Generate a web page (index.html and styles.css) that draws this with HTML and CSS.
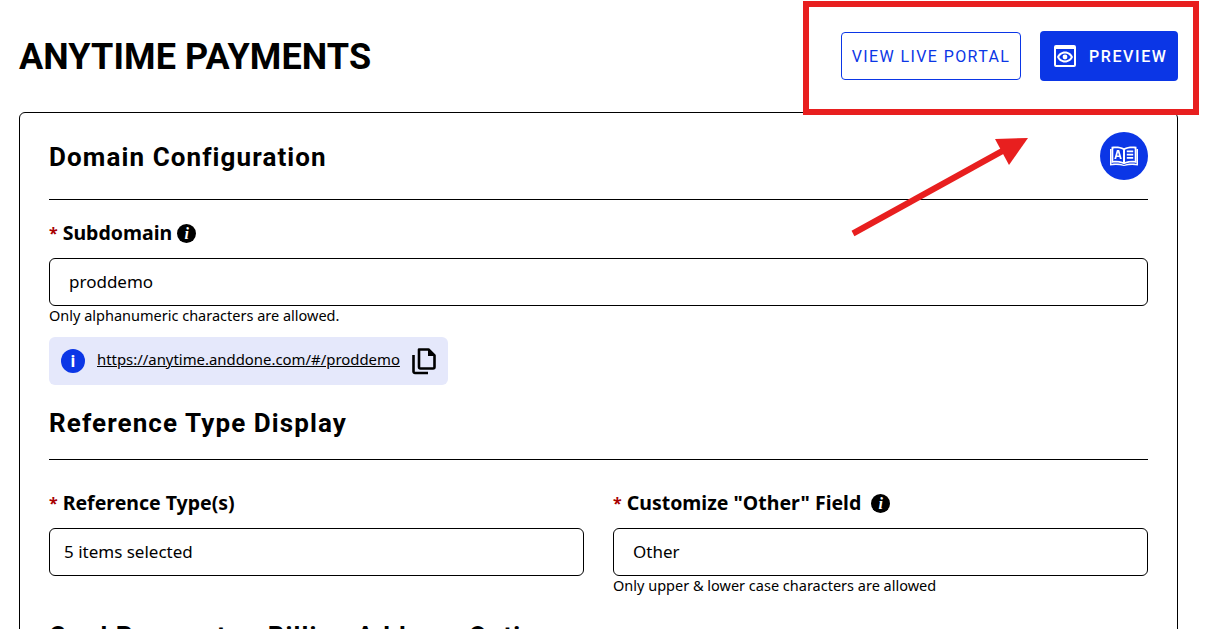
FILE: index.html
```html
<!DOCTYPE html>
<html lang="en">
<head>
<meta charset="utf-8">
<title>Anytime Payments</title>
<link rel="stylesheet" href="styles.css">
</head>
<body>
<div class="page">
  <header class="top">
    <h1 class="title">ANYTIME PAYMENTS</h1>
    <div class="actions">
      <a class="btn btn-outline">VIEW LIVE PORTAL</a>
      <a class="btn btn-solid">
        <svg class="eye" viewBox="0 0 22 22" width="22" height="22"><path fill="#fff" fill-rule="evenodd" d="M2 0h18a2 2 0 0 1 2 2v18a2 2 0 0 1-2 2H2a2 2 0 0 1-2-2V2a2 2 0 0 1 2-2zM2 4v16h18V4z"/><path fill="#fff" fill-rule="evenodd" d="M11 6.500c3.800 0 6.600 2.300 8 5.500-1.400 3.200-4.200 5.500-8 5.500S4.400 15.200 3 12c1.400-3.200 4.200-5.500 8-5.500zm0 1.900c-2.600 0-4.700 1.500-5.800 3.600 1.100 2.100 3.200 3.600 5.800 3.600s4.700-1.500 5.800-3.600c-1.100-2.100-3.200-3.600-5.800-3.600z"/><circle cx="11" cy="12" r="2.400" fill="#fff"/></svg>
        <span>PREVIEW</span>
      </a>
    </div>
  </header>

  <main class="card">
    <div class="section-head">
      <h2 class="section-title">Domain Configuration</h2>
      <span class="round-btn">
        <svg viewBox="0 0 28 20" width="28" height="20"><path fill="#fff" fill-rule="evenodd" d="M1.500 .8C5.500 0 10.500 .3 14 2.200 17.500 .3 22.500 0 26.500 .8V17c-4-.8-9-.6-12.500 1.300C10.500 16.400 5.500 16.200 1.500 17zM3.300 2.500v12.500c3.300-.4 6.500-.1 9.700 1.100V3.700C10 2.300 6.500 2 3.300 2.500zM15 3.700v12.400c3.200-1.200 6.400-1.500 9.700-1.100V2.500C21.500 2 18 2.300 15 3.700z"/><path fill="#fff" d="M0 3h1.500v15c4-.8 8.500-.6 12.500 1 4-1.600 8.500-1.800 12.500-1V3H28v16.500c-4.500-.9-9.500-.7-14 .5-4.500-1.200-9.500-1.400-14-.5z"/><path fill="#fff" fill-rule="evenodd" d="M6.900 4h2.300l2.600 9H9.900l-.5-1.900H6.700L6.200 13H4.300zm1.100 2.300-.9 3.300h1.900zM16.800 4.500h6.400v1.800h-6.400zM16.800 7.700h6.400v1.800h-6.400zM16.800 10.900h6.400v1.800h-6.400z"/></svg>
      </span>
    </div>
    <hr class="rule">

    <div class="field field-sub">
      <label class="label"><span class="req">*</span> Subdomain <span class="tip">i</span></label>
      <div class="input input-wide"><span class="value">proddemo</span></div>
      <p class="hint">Only alphanumeric characters are allowed.</p>
    </div>

    <div class="url-box">
      <span class="info-dot">i</span>
      <a class="url">https://anytime.anddone.com/#/proddemo</a>
      <svg class="copy" viewBox="0 0 24 27" width="24" height="27"><path fill="none" stroke="#000" stroke-width="2.600" stroke-linejoin="round" d="M7 1.500h9.500l6 6V19a1.500 1.500 0 0 1-1.500 1.500H8.500A1.500 1.500 0 0 1 7 19z"/><path fill="#000" d="M16 1.500l6.500 6.500H16z"/><path fill="none" stroke="#000" stroke-width="2.600" d="M1.500 7v16.500a1.500 1.500 0 0 0 1.500 1.500H16"/></svg>
    </div>

    <h2 class="section-title second">Reference Type Display</h2>
    <hr class="rule rule-second">

    <div class="two-col">
      <div class="field">
        <label class="label"><span class="req">*</span> Reference Type(s)</label>
        <div class="input input-select"><span class="value">5 items selected</span></div>
      </div>
      <div class="field">
        <label class="label"><span class="req">*</span> Customize "Other" Field <span class="tip tip-gap">i</span></label>
        <div class="input input-wide"><span class="value">Other</span></div>
        <p class="hint">Only upper &amp; lower case characters are allowed</p>
      </div>
    </div>

    <h2 class="section-title third">Card Payments - Billing Address Options</h2>
  </main>
</div>

<svg class="annotation" viewBox="0 0 1225 629" width="1225" height="629">
  <rect x="806" y="4" width="390" height="108" fill="none" stroke="#e81f1f" stroke-width="6"/>
  <line x1="853" y1="233.500" x2="1006" y2="149" stroke="#e81f1f" stroke-width="6"/>
  <polygon points="995,139 1028,138 1009,165" fill="#e81f1f"/>
</svg>
</body>
</html>
```
FILE: styles.css
```css
* { box-sizing: border-box; }
html, body {
  margin: 0;
  height: 629px;
  overflow: hidden;
  background: #fff;
  color: #000;
  font-family: "Noto Sans", "Open Sans", sans-serif;
}
.page { padding: 0 47px 0 19px; }
.top {
  display: flex;
  justify-content: space-between;
  align-items: center;
  height: 112px;
}
.title {
  margin: 2px 0 0;
  font-family: Roboto, sans-serif;
  font-size: 36px;
  font-weight: 700;
  line-height: 44px;
  letter-spacing: 0.1px;
}
.actions {
  display: flex;
  align-items: center;
  gap: 19px;
}
.btn {
  display: flex;
  align-items: center;
  border-radius: 4px;
  font-family: Roboto, sans-serif;
  font-size: 16px;
  font-weight: 500;
}
.btn-outline {
  justify-content: center;
  width: 180px;
  height: 48px;
  border: 1px solid #0b36e6;
  color: #0b36e6;
  font-weight: 400;
  letter-spacing: 1.4px;
}
.btn-solid {
  width: 138px;
  height: 50px;
  gap: 13px;
  padding-left: 14px;
  background: #0b36e6;
  color: #fff;
  letter-spacing: 1.6px;
}
.eye { flex: none; }
.card {
  border: 1px solid #000;
  border-radius: 6px;
  padding: 19px 29px 0;
  height: 600px;
}
.section-head {
  display: flex;
  justify-content: space-between;
  align-items: center;
  height: 48px;
}
.section-head .section-title { margin-top: 2px; }
.section-title {
  margin: 0;
  font-family: Roboto, sans-serif;
  font-size: 26px;
  font-weight: 700;
  line-height: 32px;
  letter-spacing: 1.1px;
}
.round-btn {
  width: 48px;
  height: 48px;
  border-radius: 50%;
  background: #0b36e6;
  display: flex;
  align-items: center;
  justify-content: center;
}
.rule {
  margin: 19px 0 0;
  border: 0;
  border-top: 1px solid #000;
}
.rule-second { margin-top: 20px; }
.field-sub { margin-top: 21px; }
.label {
  display: flex;
  align-items: center;
  gap: 5px;
  height: 24px;
  font-size: 19.500px;
  font-weight: 700;
  line-height: 24px;
}
.req { color: #a80000; font-size: 16px; }
.tip {
  width: 19px;
  height: 19px;
  border-radius: 50%;
  background: #000;
  color: #fff;
  font-family: "Liberation Serif", serif;
  font-size: 16px;
  font-style: italic;
  font-weight: 700;
  line-height: 19px;
  text-align: center;
}
.tip-gap { margin-left: 5px; }
.input {
  display: flex;
  align-items: center;
  height: 48px;
  margin-top: 13px;
  border: 1px solid #000;
  border-radius: 6px;
  font-size: 17px;
}
.value { margin-top: -2px; }
.input-wide { padding-left: 19px; }
.input-select { padding-left: 14px; }
.hint {
  margin: 0;
  font-size: 14.500px;
  line-height: 18px;
}
.url-box {
  display: inline-flex;
  align-items: center;
  width: 399px;
  height: 48px;
  margin-top: 13px;
  padding: 0 12px;
  border-radius: 6px;
  background: #e5e8fb;
  vertical-align: top;
}
.info-dot {
  flex: none;
  width: 24px;
  height: 24px;
  border-radius: 50%;
  background: #0b36e6;
  color: #fff;
  font-size: 16px;
  font-weight: 700;
  line-height: 24px;
  text-align: center;
}
.url {
  margin: -4px 0 0 12px;
  font-size: 14.900px;
  text-decoration: underline;
  white-space: nowrap;
}
.copy { flex: none; margin-left: 12px; }
.second { margin-top: 22px; }
.two-col {
  display: grid;
  grid-template-columns: 535px 535px;
  column-gap: 29px;
  margin-top: 31px;
}
.third { margin-top: 26px; }
.annotation {
  position: absolute;
  left: 0;
  top: 0;
  pointer-events: none;
}
```
